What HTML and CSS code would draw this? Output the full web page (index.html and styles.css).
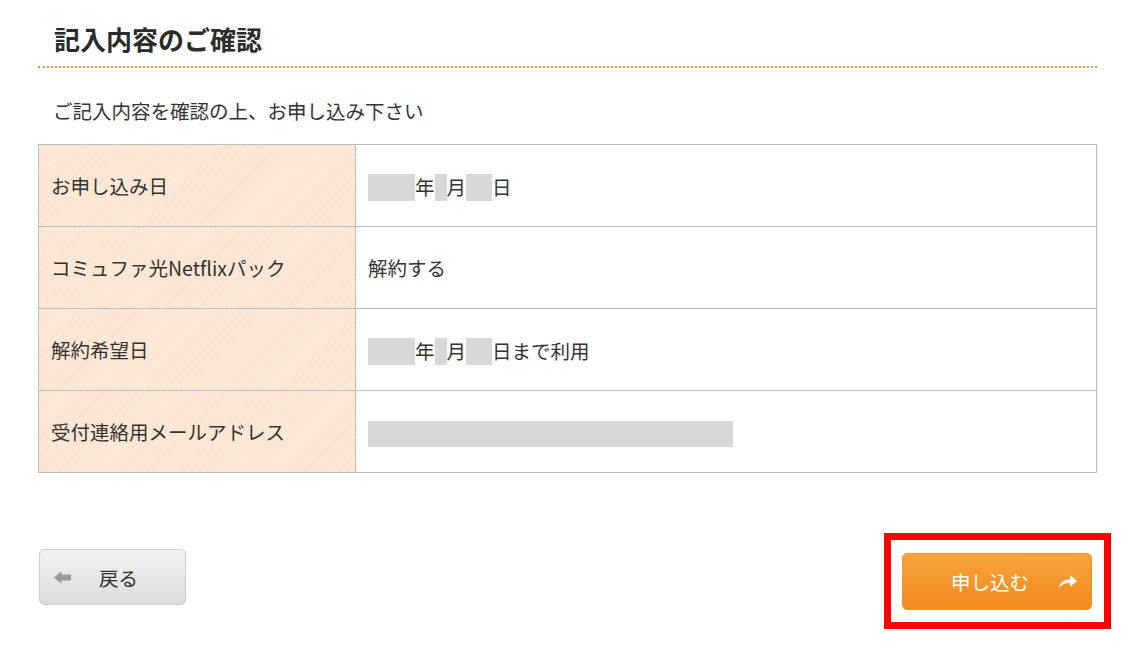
FILE: index.html
```html
<!DOCTYPE html>
<html lang="ja">
<head>
<meta charset="utf-8">
<link rel="stylesheet" href="styles.css">
</head>
<body>
<div class="page">
  <h1 class="title">記入内容のご確認</h1>
  <div class="rule"></div>
  <p class="lead">ご記入内容を確認の上、お申し込み下さい</p>
  <table class="confirm">
    <tr>
      <th>お申し込み日</th>
      <td><span class="mask w47"></span><span class="u">年</span><span class="mask w12"></span><span class="u">月</span><span class="mask w26"></span><span class="u">日</span></td>
    </tr>
    <tr>
      <th>コミュファ光Netflixパック</th>
      <td>解約する</td>
    </tr>
    <tr>
      <th>解約希望日</th>
      <td><span class="mask w47"></span><span class="u">年</span><span class="mask w12"></span><span class="u">月</span><span class="mask w26"></span><span class="u">日まで利用</span></td>
    </tr>
    <tr>
      <th>受付連絡用メールアドレス</th>
      <td><span class="mask w365"></span></td>
    </tr>
  </table>
  <div class="actions">
    <button class="btn back">
      <svg class="ico-back" viewBox="0 0 17 13" width="17" height="13"><path d="M0 6.5 L7.5 0 L7.5 3.5 L17 3.5 L17 9.5 L7.5 9.5 L7.5 13 Z" fill="#9a9a9a"/></svg>
      <span>戻る</span>
    </button>
    <div class="submit-wrap">
      <button class="btn submit">
        <span>申し込む</span>
        <svg class="ico-go" viewBox="0 0 18 13" width="18" height="13"><path d="M0 13 C1 7 5 4.5 11 4.5 L11 0 L18 6 L11 12 L11 8 C6 8 2.5 9.5 0 13 Z" fill="#ffffff"/></svg>
      </button>
      <div class="highlight"></div>
    </div>
  </div>
</div>
</body>
</html>
```

FILE: styles.css
```css
html, body {
  margin: 0;
  padding: 0;
  background: #ffffff;
}
body {
  font-family: "Noto Sans CJK JP", "Noto Sans", sans-serif;
  color: #333333;
}
.page {
  width: 1059px;
  margin-left: 38px;
  padding-top: 22px;
  padding-bottom: 40px;
}
.title {
  margin: 0 0 0 16px;
  font-size: 26px;
  line-height: 34px;
  font-weight: bold;
  color: #2b2b2b;
}
.rule {
  margin-top: 10px;
  height: 0;
  border-bottom: 2px dotted #f0903c;
}
.lead {
  margin: 30px 0 0 15px;
  font-size: 19.5px;
  line-height: 26px;
  color: #333333;
}
.confirm {
  margin-top: 20px;
  width: 1059px;
  border-collapse: collapse;
}
.confirm th,
.confirm td {
  border: 1px solid #bdbdbd;
  height: 81px;
  padding: 0;
  font-size: 19.5px;
  font-weight: normal;
  text-align: left;
  vertical-align: middle;
}
.confirm th {
  width: 304px;
  padding-left: 12px;
  background-color: #fee4ce;
  background-image: repeating-linear-gradient(-45deg, #fddfc6 0 1.5px, #ffeee0 1.5px 3px);
}
.confirm td {
  padding-left: 12px;
  background: #ffffff;
}
.mask {
  display: inline-block;
  height: 27px;
  background: #d8d8d8;
  vertical-align: middle;
}
.u {
  vertical-align: middle;
}
.w47 { width: 47px; }
.w12 { width: 12px; }
.w26 { width: 26px; }
.w365 { width: 365px; height: 26px; }
.actions {
  display: flex;
  justify-content: space-between;
  align-items: flex-start;
  margin-top: 76px;
}
.btn {
  font-family: "Noto Sans CJK JP", "Noto Sans", sans-serif;
  font-size: 19.5px;
  display: flex;
  align-items: center;
  cursor: pointer;
}
.back {
  margin-left: 1px;
  width: 147px;
  height: 56px;
  padding: 0 0 0 14px;
  border: 1px solid #cfcfcf;
  border-radius: 5px;
  background: linear-gradient(#f2f2f2, #dcdcdc);
  color: #333333;
}
.back .ico-back {
  margin-right: 28px;
}
.submit-wrap {
  position: relative;
  margin-top: 4px;
  margin-right: 5px;
}
.submit {
  width: 190px;
  height: 57px;
  padding: 0 14px 0 48px;
  justify-content: space-between;
  border: 1px solid #f2922c;
  border-radius: 5px;
  background: linear-gradient(#f7a43c, #f18a1c);
  color: #ffffff;
}
.highlight {
  position: absolute;
  left: -18px;
  top: -20px;
  right: -19px;
  bottom: -19px;
  border: 7px solid #ff0000;
  pointer-events: none;
}
```
